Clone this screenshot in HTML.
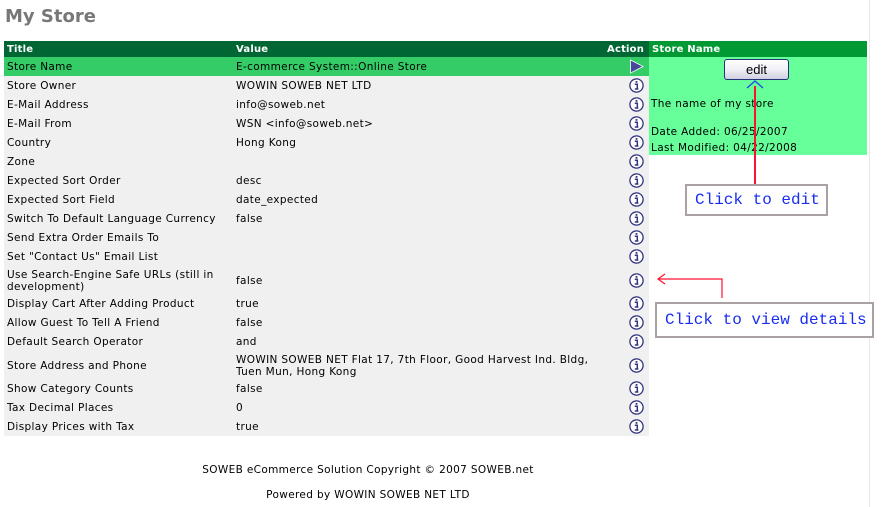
<!DOCTYPE html>
<html><head><meta charset="utf-8"><style>
*{margin:0;padding:0;box-sizing:border-box}
body{width:883px;height:507px;background:#fff;position:relative;overflow:hidden;font-family:"DejaVu Sans","Liberation Sans",sans-serif;font-size:10.5px;letter-spacing:0.35px;color:#000}
.a{position:absolute}
h1{position:absolute;left:5px;top:6px;font-size:18px;font-weight:bold;color:#777;font-family:"DejaVu Sans",sans-serif;letter-spacing:0}
.hd{position:absolute;top:41px;height:16px;color:#fff;font-weight:bold;font-size:10px;line-height:17px;letter-spacing:0.2px}
.r{position:absolute;left:4px;width:645px;background:#eff0ef}
.r .t{position:absolute;left:3px;width:228px;line-height:12px}
.r .v{position:absolute;left:232px;width:365px;line-height:12px}
.cl{position:absolute;border:2px solid #aaa2a2;background:#fff;color:#1a2cf0;font-family:"Liberation Mono",monospace;font-size:16px;line-height:28px;padding-left:8px;white-space:nowrap;letter-spacing:0}
</style></head><body>
<h1>My Store</h1>
<div class="a" style="left:869px;top:0;width:1px;height:507px;background:#e8e8e8"></div>
<div class="hd" style="left:4px;width:645px;background:#006633"></div>
<div class="hd" style="left:7px">Title</div>
<div class="hd" style="left:236px">Value</div>
<div class="hd" style="left:607px">Action</div>
<div class="hd" style="left:649px;width:218px;background:#009933;padding-left:3px">Store Name</div>
<div class="a" style="left:649px;top:57px;width:218px;height:98px;background:#66ff99"></div>
<div class="a" style="left:651px;top:98px;line-height:12px">The name of my store</div>
<div class="a" style="left:651px;top:126px;line-height:12px">Date Added: 06/25/2007</div>
<div class="a" style="left:651px;top:142px;line-height:12px">Last Modified: 04/22/2008</div>
<div class="a" style="left:724px;top:59px;width:65px;height:21px;border:1px solid #223377;border-radius:3px;background:linear-gradient(#fff,#f0f0f6 50%,#cfcfe0);font-family:'Liberation Sans',sans-serif;font-size:13px;text-align:center;line-height:19px;letter-spacing:0">edit</div>

<div id="rows"></div>
<script>
var rows=[["Store Name","E-commerce System::Online Store",19],["Store Owner","WOWIN SOWEB NET LTD",19],["E-Mail Address","info@soweb.net",19],["E-Mail From","WSN &lt;info@soweb.net&gt;",19],["Country","Hong Kong",19],["Zone","",19],["Expected Sort Order","desc",19],["Expected Sort Field","date_expected",19],["Switch To Default Language Currency","false",19],["Send Extra Order Emails To","",19],["Set \"Contact Us\" Email List","",19],["Use Search-Engine Safe URLs (still in development)","false",28],["Display Cart After Adding Product","true",19],["Allow Guest To Tell A Friend","false",19],["Default Search Operator","and",19],["Store Address and Phone","WOWIN SOWEB NET Flat 17, 7th Floor, Good Harvest Ind. Bldg, Tuen Mun, Hong Kong",28],["Show Category Counts","false",19],["Tax Decimal Places","0",19],["Display Prices with Tax","true",19]];
var y=57,h='';
var info='<svg width="15" height="15" viewBox="0 0 15 15"><circle cx="7.5" cy="7.5" r="6.6" fill="#fff" stroke="#333380" stroke-width="1.3"/><rect x="6.6" y="3" width="1.8" height="1.8" fill="#333380"/><path d="M5.8 6.3H8.3V11H9.4M5.8 11H9.4" stroke="#333380" stroke-width="1.5" fill="none"/></svg>';
var play='<svg width="15" height="15" viewBox="0 0 15 15"><path d="M1.5 1L14 7.5L1.5 14Z" fill="#46469a" stroke="#fff" stroke-width="0.8"/></svg>';
rows.forEach(function(r,i){
 var H=r[2],ty=4,vy=4;
 if(i==11){ty=3;vy=9}
 if(i==15){vy=3;ty=9}
 h+='<div class="r" style="top:'+y+'px;height:'+H+'px;'+(i==0?'background:#33cc66':'')+'"><div class="t" style="top:'+ty+'px">'+r[0]+'</div><div class="v" style="top:'+vy+'px">'+r[1]+'</div><div style="position:absolute;left:625px;top:'+Math.round(H/2-7.5)+'px;line-height:0">'+(i==0?play:info)+'</div></div>';
 y+=H;});
document.getElementById('rows').innerHTML=h;
</script>

<div class="a" style="left:754px;top:86px;width:1.5px;height:98px;background:#ff1030"></div>
<svg class="a" style="left:746px;top:80px" width="18" height="10"><path d="M1 8L9 1L17 8" stroke="#2244ee" stroke-width="1.3" fill="none"/></svg>
<div class="cl" style="left:685px;top:184px;width:143px;height:32px">Click to edit</div>
<svg class="a" style="left:655px;top:270px" width="75" height="32"><path d="M3 9H67V28" stroke="#ff1030" stroke-width="1.2" fill="none"/><path d="M10 4L3 9L10 14" stroke="#ff1030" stroke-width="1.2" fill="none"/></svg>
<div class="cl" style="left:655px;top:302px;width:219px;height:36px;line-height:32px">Click to view details</div>

<div class="a" style="left:0;width:736px;top:464px;text-align:center;line-height:12px">SOWEB eCommerce Solution Copyright © 2007 SOWEB.net</div>
<div class="a" style="left:0;width:736px;top:489px;text-align:center;line-height:12px">Powered by WOWIN SOWEB NET LTD</div>
</body></html>
